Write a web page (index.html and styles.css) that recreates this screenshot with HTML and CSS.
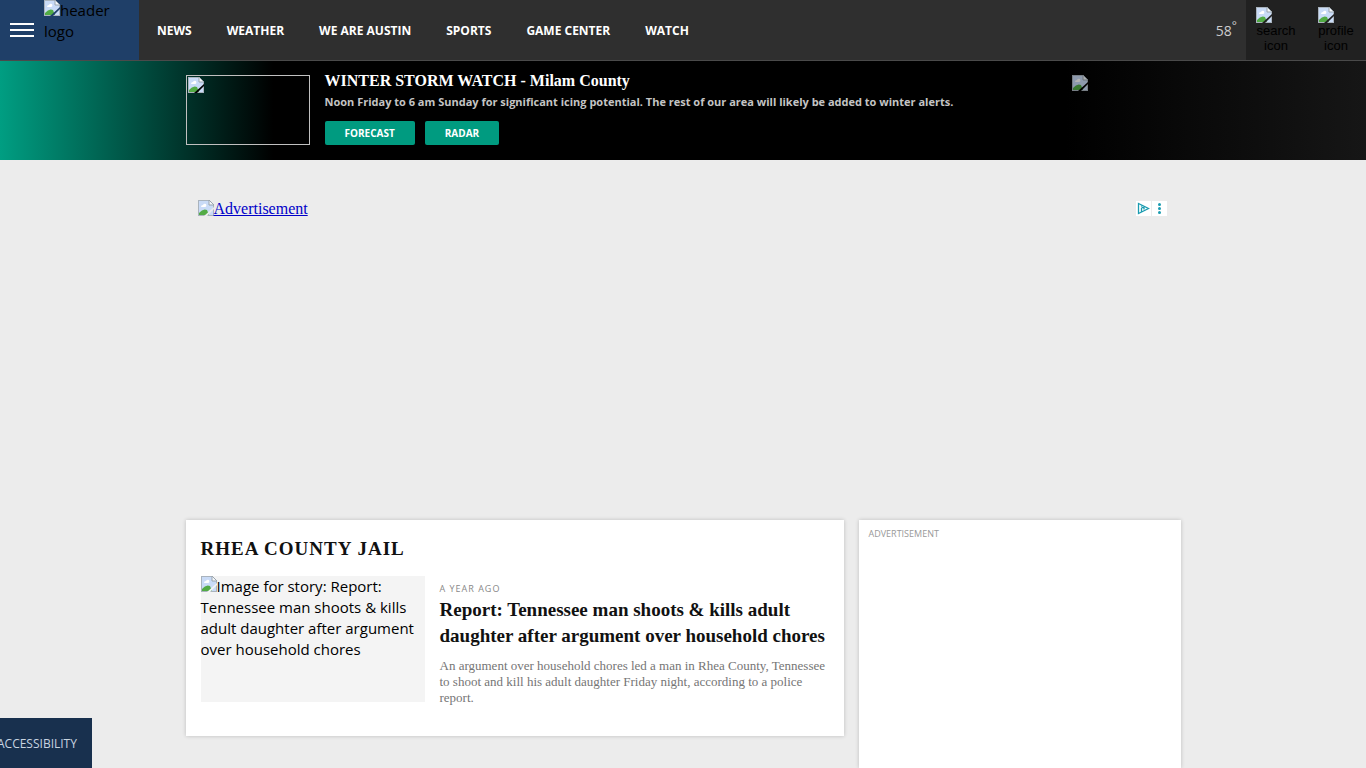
FILE: index.html
```html
<!DOCTYPE html>
<html lang="en">
<head>
  <meta charset="UTF-8">
  <meta name="viewport" content="width=device-width, initial-scale=1">
  <title>Rhea County Jail</title>
  <link rel="stylesheet" href="styles.css">
</head>
<body>
  <svg class="sprite" width="0" height="0" aria-hidden="true">
    <symbol id="missing" viewBox="0 0 16 16">
      <path d="M0 0h11l5 5v11H0z" fill="#a9b3bd"/>
      <path d="M1 1h10v4h4v10H1z" fill="#c9dbf7"/>
      <path d="M3 7q0-2 2-2 1-2 3-1 1 3-1 3z" fill="#fff"/>
      <path d="M1 15v-2q4-5 8-3l2 5z" fill="#52ab45"/>
      <path d="M11 0l5 5h-5z" fill="#f4f7fa" stroke="#9aa5ae"/>
      <path class="tear" d="M16 7v2l-7 7H6z"/>
    </symbol>
  </svg>

  <header class="site-header">
    <div class="brand">
      <button class="menu-btn" aria-label="Menu">
        <span></span><span></span><span></span>
      </button>
      <a href="#" class="logo"><svg class="missing"><use href="#missing"/></svg>header logo</a>
    </div>
    <nav class="main-nav">
      <a href="#">NEWS</a>
      <a href="#">WEATHER</a>
      <a href="#">WE ARE AUSTIN</a>
      <a href="#">SPORTS</a>
      <a href="#">GAME CENTER</a>
      <a href="#">WATCH</a>
    </nav>
    <a href="#" class="temp">58<sup>°</sup></a>
    <div class="tools">
      <button><svg class="missing"><use href="#missing"/></svg><span>search icon</span></button>
      <button><svg class="missing"><use href="#missing"/></svg><span>profile icon</span></button>
    </div>
  </header>

  <section class="alert">
    <div class="container alert-inner">
      <div class="alert-thumb"><svg class="missing"><use href="#missing"/></svg></div>
      <div class="alert-text">
        <h2>WINTER STORM WATCH - Milam County</h2>
        <p>Noon Friday to 6 am Sunday for significant icing potential. The rest of our area will likely be added to winter alerts.</p>
        <div class="alert-links">
          <a href="#">FORECAST</a>
          <a href="#">RADAR</a>
        </div>
      </div>
      <div class="alert-sponsor"><svg class="missing"><use href="#missing"/></svg></div>
    </div>
  </section>

  <div class="container top-ad">
    <a href="#" class="ad-link"><svg class="missing"><use href="#missing"/></svg>Advertisement</a>
    <div class="ad-choices">
      <svg width="15" height="15" viewBox="0 0 15 15" fill="none" stroke="#1a9bb0" stroke-width="1.3">
        <path d="M2.500 2.500v10l10-5z"/>
        <path d="M5.500 7v4M5.500 4.500v1M5.500 6.500h2.500v2"/>
      </svg>
      <svg width="15" height="15" viewBox="0 0 15 15" fill="#1a9bb0">
        <circle cx="7.500" cy="3.500" r="1.500"/>
        <circle cx="7.500" cy="7.500" r="1.500"/>
        <circle cx="7.500" cy="11.500" r="1.500"/>
      </svg>
    </div>
  </div>

  <main class="container content">
    <section class="card stories">
      <h1>RHEA COUNTY JAIL</h1>
      <article class="story">
        <a href="#" class="story-image"><svg class="missing"><use href="#missing"/></svg>Image for story: Report: Tennessee man shoots &amp; kills adult daughter after argument over household chores</a>
        <div class="story-text">
          <time>A YEAR AGO</time>
          <h3><a href="#">Report: Tennessee man shoots &amp; kills adult daughter after argument over household chores</a></h3>
          <p>An argument over household chores led a man in Rhea County, Tennessee to shoot and kill his adult daughter Friday night, according to a police report.</p>
        </div>
      </article>
    </section>
    <aside class="card side-ad">ADVERTISEMENT</aside>
  </main>

  <button class="accessibility">ACCESSIBILITY</button>
</body>
</html>
```
FILE: styles.css
```css
* {
  box-sizing: border-box;
}

body {
  margin: 0;
  min-height: 100vh;
  display: flex;
  flex-direction: column;
  background: #ececec;
  font-family: "Open Sans", "Segoe UI", sans-serif;
  color: #111;
}

h1, h2, h3, p {
  margin: 0;
}

h1, h2, h3 {
  font-family: "Liberation Serif", "Times New Roman", serif;
}

a {
  color: inherit;
  text-decoration: none;
}

button {
  border: 0;
  padding: 0;
  background: none;
  cursor: pointer;
}

.sprite {
  position: absolute;
}

.missing {
  width: 16px;
  height: 16px;
  fill: #ececec;
}

.container {
  width: 100%;
  max-width: 995px;
  margin: 0 auto;
}

/* header */
.site-header {
  display: flex;
  height: 61px;
  background: #2f2f2f;
  border-bottom: 1px solid #4a4a4a;
}

.brand {
  display: flex;
  width: 139px;
  padding-left: 10px;
  gap: 10px;
  background: #1f3f68;
}

.menu-btn {
  display: flex;
  flex-direction: column;
  justify-content: center;
  gap: 4px;
  width: 24px;
}

.menu-btn span {
  height: 2px;
  background: #fff;
}

.logo {
  width: 76px;
  font-size: 15px;
  line-height: 21px;
  color: #000;
}

.logo .missing {
  fill: #1f3f68;
}

.main-nav {
  display: flex;
  align-items: center;
  gap: 35px;
  flex: 1;
  padding-left: 18px;
  font-size: 12px;
  font-weight: 700;
  color: #fff;
}

.temp {
  display: flex;
  align-items: center;
  padding-right: 9px;
  font-size: 14px;
  color: #ccc;
}

.temp sup {
  padding-bottom: 10px;
  font-size: 12px;
}

.tools {
  display: flex;
  background: #212121;
}

.tools button {
  display: grid;
  grid-template-columns: min-content;
  place-content: center;
  width: 60px;
  font: 13px/15px "Liberation Sans", Arial, sans-serif;
  color: #000;
}

.tools .missing {
  display: block;
  fill: #212121;
}

/* weather alert */
.alert {
  padding: 14px 0 15px;
  background: linear-gradient(90deg, #009e82 0%, #000 20%, #000 78%, #161616 100%);
}

.alert-inner {
  display: flex;
}

.alert-thumb {
  width: 124px;
  height: 70px;
  border: 1px solid #c0c0c0;
  padding: 1px;
}

.alert .missing {
  display: block;
  fill: #000;
}

.alert-text {
  flex: 1;
  padding-left: 15px;
}

.alert-text h2 {
  font-size: 16px;
  line-height: 12px;
  color: #fff;
}

.alert-text p {
  padding-top: 5px;
  font-size: 11px;
  line-height: 20px;
  font-weight: 700;
  color: #c4c4c4;
}

.alert-links {
  display: flex;
  gap: 10px;
  padding-top: 9px;
}

.alert-links a {
  padding: 0 20px;
  border-radius: 2px;
  background: #009b80;
  font-size: 10px;
  line-height: 24px;
  font-weight: 700;
  color: #fff;
}

.alert-sponsor {
  width: 109px;
  opacity: 0.7;
}

/* top advertisement */
.top-ad {
  display: flex;
  justify-content: space-between;
  align-items: flex-start;
  height: 360px;
  padding: 40px 14px 0 12px;
}

.ad-link {
  display: flex;
  font: 16px/18px "Liberation Serif", "Times New Roman", serif;
  color: #0000c8;
  text-decoration: underline;
}

.ad-choices {
  display: flex;
  gap: 1px;
  padding-top: 1px;
}

.ad-choices svg {
  background: #fff;
}

/* content */
.content {
  flex: 1;
  display: grid;
  grid-template-columns: 1fr 322px;
  gap: 15px;
}

.card {
  background: #fff;
  box-shadow: 0 0 4px rgba(0, 0, 0, 0.2);
}

.stories {
  align-self: start;
  padding: 16px 15px 30px;
}

.stories h1 {
  font-size: 19px;
  line-height: 26px;
  letter-spacing: 1px;
}

.story {
  display: flex;
  gap: 15px;
  padding-top: 14px;
}

.story-image {
  flex: none;
  width: 224px;
  height: 126px;
  background: #f4f4f4;
  font-size: 15px;
  line-height: 21px;
  color: #000;
}

.story-image .missing {
  fill: #f4f4f4;
  vertical-align: top;
}

.logo .missing {
  vertical-align: top;
}

.story-text {
  padding-top: 4px;
}

.story-text time {
  display: block;
  font-size: 9px;
  line-height: 17px;
  letter-spacing: 1px;
  color: #888;
}

.story-text h3 {
  font-size: 19px;
  line-height: 26px;
}

.story-text p {
  padding-top: 9px;
  font: 13px/16px "Liberation Serif", "Times New Roman", serif;
  color: #757575;
}

.side-ad {
  padding: 8px 10px;
  font-size: 9px;
  line-height: 12px;
  color: #999;
}

.accessibility {
  position: fixed;
  left: -18px;
  bottom: 0;
  height: 50px;
  padding: 0 15px;
  background: #18304e;
  font-family: inherit;
  font-size: 12px;
  color: #c8d4e0;
}
```
